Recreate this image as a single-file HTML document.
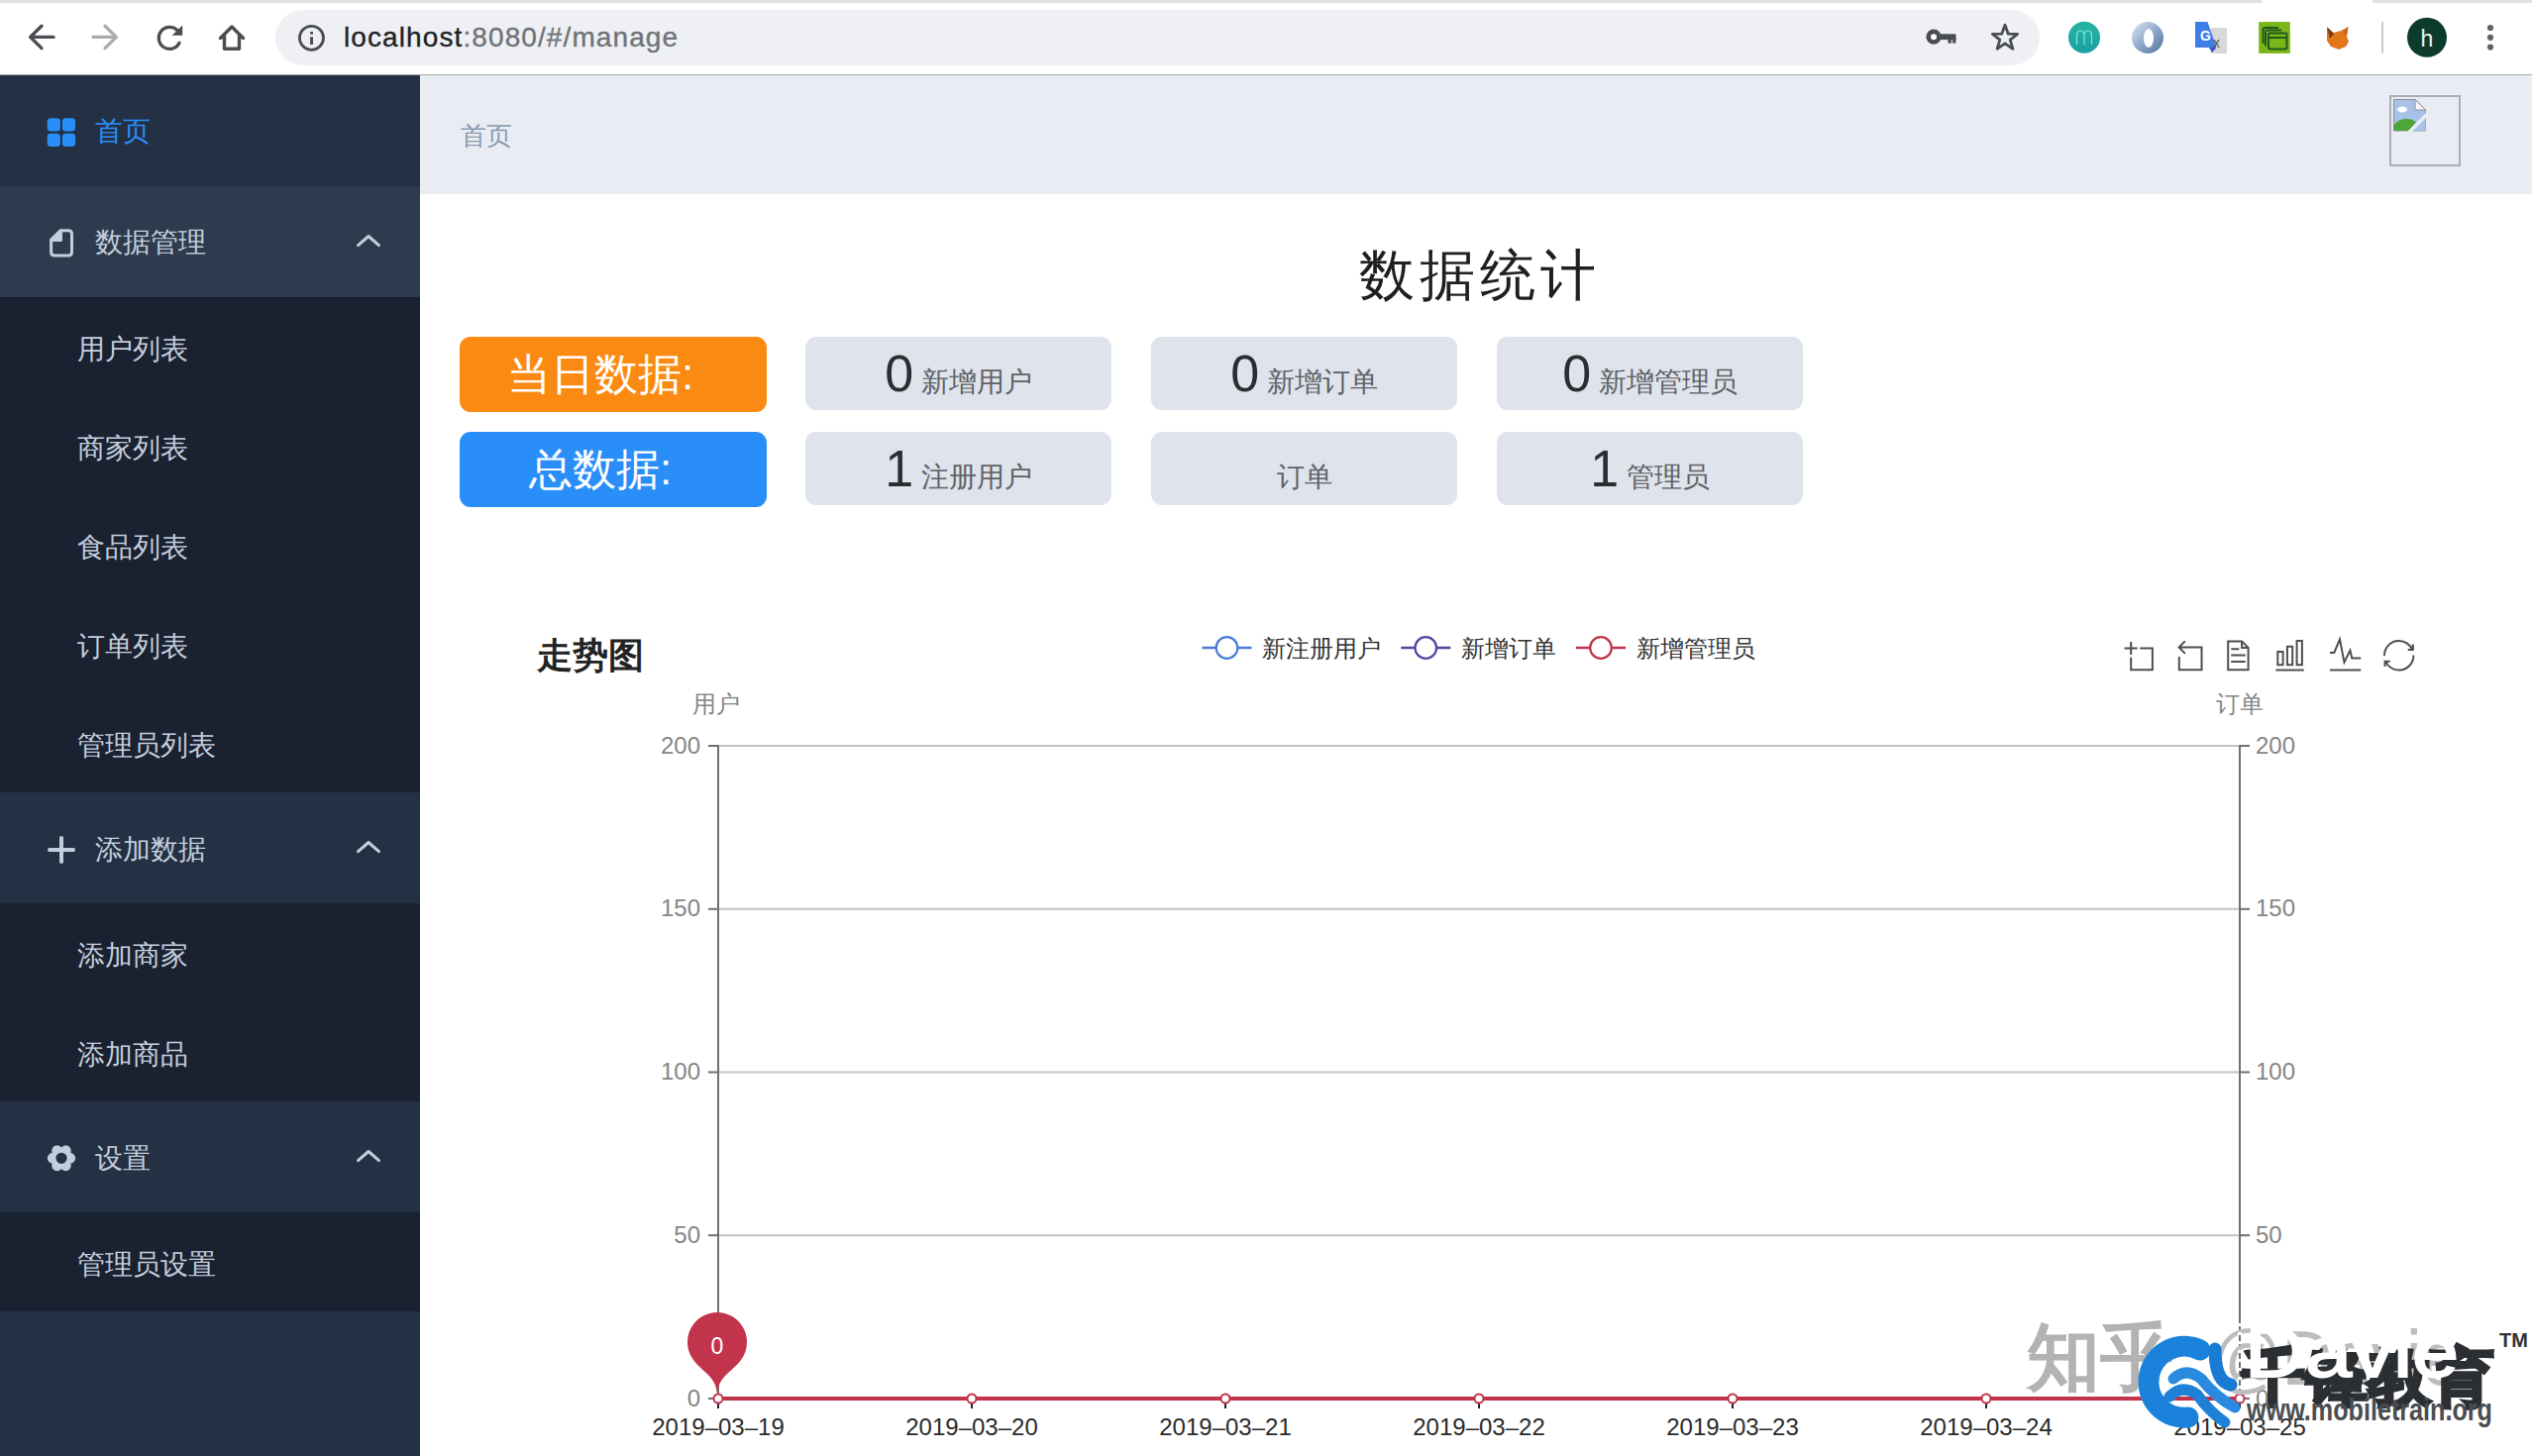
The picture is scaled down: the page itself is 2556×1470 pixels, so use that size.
<!DOCTYPE html>
<html><head><meta charset="utf-8">
<style>
*{box-sizing:border-box;margin:0;padding:0}
html,body{width:2556px;height:1470px;overflow:hidden;background:#fff;font-family:"Liberation Sans",sans-serif}
.a{position:absolute;white-space:nowrap}
#chrome{position:absolute;left:0;top:0;width:2556px;height:76px;background:#fff;border-bottom:1px solid #a9abae}
#strip{position:absolute;left:0;top:0;width:2556px;height:3px;background:#dee1e6}
#url{position:absolute;left:278px;top:10px;width:1781px;height:56px;border-radius:28px;background:#eef0f3}
#side{position:absolute;left:0;top:76px;width:424px;height:1394px;background:#243043}
.mi{position:absolute;left:0;width:424px;height:112px;background:#243043}
.hov{background:#2e3a4d}
.sub{position:absolute;left:0;width:424px;background:#1a2130}
.mt{position:absolute;left:96px;font-size:28px;line-height:28px;color:#c3cedc}
.st{position:absolute;left:78px;font-size:28px;line-height:28px;color:#c3cedc}
#head{position:absolute;left:424px;top:76px;width:2132px;height:120px;background:#e9edf3}
.box{position:absolute;border-radius:11px;background:#dfe3eb;text-align:center;color:#5e6166}
.num{font-size:52px;color:#2b2d30}
</style></head><body>
<div id="chrome"><div id="strip"></div><div id="url"></div>
<svg class="a" style="left:1900px;top:0" width="656" height="76">
<defs>
<linearGradient id="tg" x1="0" y1="0" x2="0" y2="1"><stop offset="0" stop-color="#25b59f"/><stop offset="1" stop-color="#1c9fa6"/></linearGradient>
<linearGradient id="jg" x1="0" y1="0" x2="1" y2="1"><stop offset="0" stop-color="#dfe8f2"/><stop offset="0.5" stop-color="#90aacb"/><stop offset="1" stop-color="#4f6f99"/></linearGradient>
</defs>
<rect x="383" y="0" width="112" height="3" fill="#fff"/>
<g fill="#4a4d51">
<circle cx="52" cy="37.2" r="7.6"/>
<rect x="56" y="34.3" width="18.4" height="5.8"/>
<rect x="66.5" y="37" width="3.4" height="6.6"/><rect x="71" y="37" width="3.4" height="6.6"/>
</g>
<circle cx="52" cy="37.2" r="3" fill="#fff"/>
<path d="M124,25.2 L127.3,34.2 L136.6,34.4 L129.2,40.1 L131.9,49.3 L124,43.8 L116.1,49.3 L118.8,40.1 L111.4,34.4 L120.7,34.2 Z" fill="none" stroke="#4a4d51" stroke-width="2.8" stroke-linejoin="round"/>
<circle cx="204" cy="37.8" r="16" fill="url(#tg)"/>
<path d="M196.5,45 V35.5 Q196.5,31 200.5,31 Q204,31 204,35.5 V45 M204,35.5 Q204,31 207.8,31 Q211.5,31 211.5,35.5 V45" fill="none" stroke="#7fe9e0" stroke-width="1.2"/>
<circle cx="268" cy="38" r="16" fill="url(#jg)"/>
<ellipse cx="269" cy="38.5" rx="5" ry="9.5" fill="#fff"/>
<rect x="332" y="28" width="16" height="26" fill="#d8d8d8"/>
<path d="M316,22 H328.5 L337.5,48 H316 Z" fill="#3f7de8"/>
<path d="M330,48 L337.5,48 L333,53 Z" fill="#2c56c2"/>
<text x="321" y="41" font-size="14" font-weight="bold" fill="#fff">G</text>
<text x="334" y="48" font-size="14" fill="#555">x</text>
<rect x="380.2" y="22.1" width="31.6" height="31.8" fill="#7cb518"/>
<g fill="none" stroke="#1f5a1c" stroke-width="2">
<path d="M384.5,44 V30 Q384.5,28 386.5,28 H400"/>
<path d="M387,46.5 V32.5 Q387,30.5 389,30.5 H403"/>
<rect x="390" y="33.5" width="18.5" height="16" rx="1.5"/>
<path d="M390,38 H408.5"/>
</g>
<path d="M449,28 L456,33 L463,31 L470.5,27 L469,37 L471,42 L468,47 L461,50 L453,47 L449,41 Z" fill="#e2761b"/>
<path d="M449,27 L456,34 L452,39 Z" fill="#763d16"/>
<path d="M470.5,27 L465,32 L469,36 Z" fill="#c0641f"/>
<rect x="504" y="22" width="2" height="32" fill="#c9cacc"/>
<circle cx="550" cy="37.8" r="20" fill="#0c3b2d"/>
<text x="550" y="46.5" font-size="23" text-anchor="middle" fill="#e8f3ee">h</text>
<g fill="#5f6368"><circle cx="614" cy="28" r="3.1"/><circle cx="614" cy="37.8" r="3.1"/><circle cx="614" cy="47.6" r="3.1"/></g>
</svg>
<svg class="a" style="left:0;top:0" width="2556" height="76">
<g fill="none" stroke-linecap="round" stroke-linejoin="round" stroke-width="3.4">
<path d="M54,37.4 H31 M42,26.2 L30.6,37.4 L42,48.6" stroke="#4a4d51"/>
<path d="M94,37.4 H117 M106,26.2 L117.4,37.4 L106,48.6" stroke="#a9acb0"/>
<path d="M222.5,38.5 L234,27 L245.5,38.5 M226.5,35.5 V49.3 H241.5 V35.5" stroke="#4a4d51"/>
</g>
<path d="M181.1,43.2 A11,11 0 1,1 178.6,30.2" fill="none" stroke="#4a4d51" stroke-width="3.2" stroke-linecap="round"/>
<path d="M184.2,25.4 V35.8 H173.6 Z" fill="#4a4d51"/>
<circle cx="314.5" cy="38.3" r="12" fill="none" stroke="#4a4d51" stroke-width="2.8"/>
<rect x="313.1" y="32" width="2.9" height="2.6" fill="#4a4d51"/><rect x="313.1" y="37.2" width="2.9" height="7.8" fill="#4a4d51"/>
</svg>
<div class="a" style="left:347px;top:18px;font-size:28px;line-height:40px;letter-spacing:1.1px;-webkit-text-stroke:0.35px #202124;color:#202124">localhost<span style="color:#6f7378;-webkit-text-stroke:0.35px #6f7378">:8080/#/manage</span></div>
</div>
<div id="side">
  <div class="mi" style="top:0"></div>
  <div class="mi hov" style="top:112px"></div>
  <div class="sub" style="top:224px;height:500px"></div>
  <div class="mi" style="top:724px"></div>
  <div class="sub" style="top:836px;height:200px"></div>
  <div class="mi" style="top:1036px"></div>
  <div class="sub" style="top:1148px;height:100px"></div>
</div>
<div class="a mt" style="top:119px;color:#2a8ef9">首页</div>
<div class="a mt" style="top:231px">数据管理</div>
<div class="a st" style="top:339px">用户列表</div>
<div class="a st" style="top:439px">商家列表</div>
<div class="a st" style="top:539px">食品列表</div>
<div class="a st" style="top:639px">订单列表</div>
<div class="a st" style="top:739px">管理员列表</div>
<div class="a mt" style="top:844px">添加数据</div>
<div class="a st" style="top:951px">添加商家</div>
<div class="a st" style="top:1051px">添加商品</div>
<div class="a mt" style="top:1156px">设置</div>
<div class="a st" style="top:1263px">管理员设置</div>
<svg class="a" style="left:0;top:0" width="424" height="1470">
<g fill="#2a8ef9"><rect x="47.7" y="119.3" width="13.2" height="13.2" rx="3.5"/><rect x="62.9" y="119.3" width="13.2" height="13.2" rx="3.5"/><rect x="47.7" y="134.7" width="13.2" height="13.2" rx="3.5"/><rect x="62.9" y="134.7" width="13.2" height="13.2" rx="3.5"/></g>
<g stroke="#c3cedc" fill="none" stroke-width="3" stroke-linecap="round" stroke-linejoin="round">
<path d="M51.6,242 L61,232.7 H69 Q72.5,232.7 72.5,236.2 V254.6 Q72.5,258.1 69,258.1 H55.1 Q51.6,258.1 51.6,254.6 Z"/>
<path d="M361.5,247.6 L372,238.5 L382.5,247.6"/>
<path d="M361.5,859.6 L372,850.5 L382.5,859.6"/>
<path d="M361.5,1171.6 L372,1162.5 L382.5,1171.6"/>
<path d="M62,846 V870 M50,858 H74" stroke-width="4"/>
</g>
<path d="M51.6,242.5 L61.5,232.7 V242.5 Z" fill="#c3cedc" stroke="#c3cedc" stroke-width="3" stroke-linejoin="round"/>
<path id="gear" fill="#c3cedc" fill-rule="evenodd" d="M76.10,1169.30 L76.09,1169.67 L76.04,1170.04 L75.97,1170.40 L75.88,1170.76 L75.75,1171.11 L75.60,1171.45 L75.43,1171.79 L75.23,1172.11 L75.01,1172.42 L74.77,1172.72 L74.50,1173.00 L74.22,1173.27 L73.91,1173.52 L73.60,1173.75 L73.26,1173.96 L72.91,1174.16 L72.55,1174.33 L72.18,1174.49 L71.78,1174.61 L71.35,1174.70 L71.49,1175.12 L71.58,1175.52 L71.63,1175.92 L71.67,1176.32 L71.67,1176.72 L71.65,1177.12 L71.61,1177.51 L71.55,1177.90 L71.46,1178.27 L71.34,1178.64 L71.21,1179.00 L71.05,1179.35 L70.87,1179.69 L70.67,1180.00 L70.45,1180.31 L70.20,1180.59 L69.94,1180.85 L69.66,1181.09 L69.36,1181.31 L69.05,1181.51 L68.72,1181.68 L68.38,1181.83 L68.03,1181.95 L67.68,1182.05 L67.31,1182.12 L66.94,1182.16 L66.56,1182.18 L66.18,1182.16 L65.80,1182.13 L65.42,1182.07 L65.04,1181.98 L64.67,1181.86 L64.30,1181.73 L63.94,1181.57 L63.59,1181.39 L63.25,1181.18 L62.92,1180.95 L62.60,1180.71 L62.29,1180.43 L62.00,1180.10 L61.71,1180.43 L61.40,1180.71 L61.08,1180.95 L60.75,1181.18 L60.41,1181.39 L60.06,1181.57 L59.70,1181.73 L59.33,1181.86 L58.96,1181.98 L58.58,1182.07 L58.20,1182.13 L57.82,1182.16 L57.44,1182.18 L57.06,1182.16 L56.69,1182.12 L56.32,1182.05 L55.97,1181.95 L55.62,1181.83 L55.28,1181.68 L54.95,1181.51 L54.64,1181.31 L54.34,1181.09 L54.06,1180.85 L53.80,1180.59 L53.55,1180.31 L53.33,1180.00 L53.13,1179.69 L52.95,1179.35 L52.79,1179.00 L52.66,1178.64 L52.54,1178.27 L52.45,1177.90 L52.39,1177.51 L52.35,1177.12 L52.33,1176.72 L52.33,1176.32 L52.37,1175.92 L52.42,1175.52 L52.51,1175.12 L52.65,1174.70 L52.22,1174.61 L51.82,1174.49 L51.45,1174.33 L51.09,1174.16 L50.74,1173.96 L50.40,1173.75 L50.09,1173.52 L49.78,1173.27 L49.50,1173.00 L49.23,1172.72 L48.99,1172.42 L48.77,1172.11 L48.57,1171.79 L48.40,1171.45 L48.25,1171.11 L48.12,1170.76 L48.03,1170.40 L47.96,1170.04 L47.91,1169.67 L47.90,1169.30 L47.91,1168.93 L47.96,1168.56 L48.03,1168.20 L48.12,1167.84 L48.25,1167.49 L48.40,1167.15 L48.57,1166.81 L48.77,1166.49 L48.99,1166.18 L49.23,1165.88 L49.50,1165.60 L49.78,1165.33 L50.09,1165.08 L50.40,1164.85 L50.74,1164.64 L51.09,1164.44 L51.45,1164.27 L51.82,1164.11 L52.22,1163.99 L52.65,1163.90 L52.51,1163.48 L52.42,1163.08 L52.37,1162.68 L52.33,1162.28 L52.33,1161.88 L52.35,1161.48 L52.39,1161.09 L52.45,1160.70 L52.54,1160.33 L52.66,1159.96 L52.79,1159.60 L52.95,1159.25 L53.13,1158.91 L53.33,1158.60 L53.55,1158.29 L53.80,1158.01 L54.06,1157.75 L54.34,1157.51 L54.64,1157.29 L54.95,1157.09 L55.28,1156.92 L55.62,1156.77 L55.97,1156.65 L56.32,1156.55 L56.69,1156.48 L57.06,1156.44 L57.44,1156.42 L57.82,1156.44 L58.20,1156.47 L58.58,1156.53 L58.96,1156.62 L59.33,1156.74 L59.70,1156.87 L60.06,1157.03 L60.41,1157.21 L60.75,1157.42 L61.08,1157.65 L61.40,1157.89 L61.71,1158.17 L62.00,1158.50 L62.29,1158.17 L62.60,1157.89 L62.92,1157.65 L63.25,1157.42 L63.59,1157.21 L63.94,1157.03 L64.30,1156.87 L64.67,1156.74 L65.04,1156.62 L65.42,1156.53 L65.80,1156.47 L66.18,1156.44 L66.56,1156.42 L66.94,1156.44 L67.31,1156.48 L67.68,1156.55 L68.03,1156.65 L68.38,1156.77 L68.72,1156.92 L69.05,1157.09 L69.36,1157.29 L69.66,1157.51 L69.94,1157.75 L70.20,1158.01 L70.45,1158.29 L70.67,1158.60 L70.87,1158.91 L71.05,1159.25 L71.21,1159.60 L71.34,1159.96 L71.46,1160.33 L71.55,1160.70 L71.61,1161.09 L71.65,1161.48 L71.67,1161.88 L71.67,1162.28 L71.63,1162.68 L71.58,1163.08 L71.49,1163.48 L71.35,1163.90 L71.78,1163.99 L72.18,1164.11 L72.55,1164.27 L72.91,1164.44 L73.26,1164.64 L73.60,1164.85 L73.91,1165.08 L74.22,1165.33 L74.50,1165.60 L74.77,1165.88 L75.01,1166.18 L75.23,1166.49 L75.43,1166.81 L75.60,1167.15 L75.75,1167.49 L75.88,1167.84 L75.97,1168.20 L76.04,1168.56 L76.09,1168.93Z M67.6,1169.3 A5.6,5.6 0 1,0 56.4,1169.3 A5.6,5.6 0 1,0 67.6,1169.3Z"/>
</svg>
<div id="head"></div>
<div class="a" style="left:465px;top:124px;font-size:26px;line-height:26px;color:#8a9ab0">首页</div>
<svg class="a" style="left:2412px;top:96px" width="72" height="72">
<rect x="1" y="1" width="70" height="70" fill="none" stroke="#a9adb4" stroke-width="2"/>
<path d="M4.5,4.5 H26 L36.5,15 V36 H4.5 Z" fill="#a9c2ea" stroke="#7a7f87" stroke-width="0.8"/>
<path d="M26,4.5 V15 H36.5 Z" fill="#f4f6fb" stroke="#7a7f87" stroke-width="0.8"/>
<ellipse cx="13" cy="14.5" rx="5" ry="3" fill="#fff"/>
<path d="M4.5,36 V30 Q15,19 27,27 L20,36 Z" fill="#4ea53a"/>
<path d="M20,36 L36.5,20 V36 Z" fill="#a9c2ea"/>
<path d="M18,37 L37,18 L37,23 L23,37 Z" fill="#e8eef5"/>
</svg>

<div class="a" style="left:1372px;top:250px;font-size:56px;line-height:56px;letter-spacing:5px;color:#1f1f1f">数据统计</div>

<div class="box" style="left:464px;top:340px;width:310px;height:76px;background:#fb8a12;color:#fff;font-size:44px;line-height:76px;padding-right:26px">当日数据:</div>
<div class="box" style="left:464px;top:436px;width:310px;height:76px;background:#2a8ef9;color:#fff;font-size:44px;line-height:76px;padding-right:26px">总数据:</div>
<div class="box" style="left:813px;top:340px;width:309px;height:74px;font-size:28px;line-height:74px"><span class="num">0</span> 新增用户</div>
<div class="box" style="left:1162px;top:340px;width:309px;height:74px;font-size:28px;line-height:74px"><span class="num">0</span> 新增订单</div>
<div class="box" style="left:1511px;top:340px;width:309px;height:74px;font-size:28px;line-height:74px"><span class="num">0</span> 新增管理员</div>
<div class="box" style="left:813px;top:436px;width:309px;height:74px;font-size:28px;line-height:74px"><span class="num">1</span> 注册用户</div>
<div class="box" style="left:1162px;top:436px;width:309px;height:74px;font-size:28px;line-height:74px"><span class="num"></span> 订单</div>
<div class="box" style="left:1511px;top:436px;width:309px;height:74px;font-size:28px;line-height:74px"><span class="num">1</span> 管理员</div>

<!--CHART-->
<svg class="a" style="left:0;top:0" width="2556" height="1470" viewBox="0 0 2556 1470">
<path d="M0,13.5h26.9 M13.5,26.9V0 M32.1,13.5H58V58H13.5V32.1" transform="translate(2144.60,648.00) scale(0.4879)" fill="none" stroke="#4f4f4f" stroke-width="2" vector-effect="non-scaling-stroke"/>
<path d="M22,1.4L9.9,13.5l12.3,12.3 M10.3,13.5H54.9v44.6 H10.3v-26" transform="translate(2194.55,646.69) scale(0.5097)" fill="none" stroke="#4f4f4f" stroke-width="2" vector-effect="non-scaling-stroke"/>
<path d="M17.5,17.3H33 M45.4,29.5h-28 M11.5,2v56H51V14.8L38.4,2H11.5z M38.4,2.2v12.7H51 M45.4,41.7h-28" transform="translate(2243.27,646.37) scale(0.5161)" fill="none" stroke="#4f4f4f" stroke-width="2" vector-effect="non-scaling-stroke"/>
<path d="M6.7,22.9h10V48h-10V22.9zM24.9,13h10v35h-10V13zM43.2,2h10v46h-10V2zM3.1,58h53.7" transform="translate(2295.76,645.94) scale(0.5286)" fill="none" stroke="#4f4f4f" stroke-width="2" vector-effect="non-scaling-stroke"/>
<path d="M4.1,28.9h7.1l9.3-22l7.4,38l9.7-19.7l3,12.8h14.9M4.1,58h51.4" transform="translate(2349.50,641.30) scale(0.6086)" fill="none" stroke="#4f4f4f" stroke-width="2" vector-effect="non-scaling-stroke"/>
<path d="M47,18.9h9.8V8.7 M56.3,20.1 C52.1,9,40.5,0.6,26.8,2.1C12.6,3.7,1.6,16.2,2.1,30.6 M13,41.1H3.1v10.2 M3.7,39.9c4.2,11.1,15.8,19.5,29.5,18 c14.2-1.6,25.2-14.1,24.7-28.5" transform="translate(2405.90,645.98) scale(0.5272)" fill="none" stroke="#4f4f4f" stroke-width="2" vector-effect="non-scaling-stroke"/>
<line x1="725" y1="753.0" x2="2261" y2="753.0" stroke="#c4c4c4" stroke-width="2"/>
<line x1="725" y1="917.8" x2="2261" y2="917.8" stroke="#c4c4c4" stroke-width="2"/>
<line x1="725" y1="1082.5" x2="2261" y2="1082.5" stroke="#c4c4c4" stroke-width="2"/>
<line x1="725" y1="1247.2" x2="2261" y2="1247.2" stroke="#c4c4c4" stroke-width="2"/>
<line x1="725" y1="752" x2="725" y2="1412" stroke="#707070" stroke-width="2"/>
<line x1="2261" y1="752" x2="2261" y2="1412" stroke="#707070" stroke-width="2"/>
<line x1="715" y1="753.0" x2="725" y2="753.0" stroke="#707070" stroke-width="2"/>
<line x1="2261" y1="753.0" x2="2271" y2="753.0" stroke="#707070" stroke-width="2"/>
<text x="707" y="760.5" text-anchor="end" font-size="24" fill="#858585">200</text>
<text x="2277" y="760.5" font-size="24" fill="#858585">200</text>
<line x1="715" y1="917.8" x2="725" y2="917.8" stroke="#707070" stroke-width="2"/>
<line x1="2261" y1="917.8" x2="2271" y2="917.8" stroke="#707070" stroke-width="2"/>
<text x="707" y="925.2" text-anchor="end" font-size="24" fill="#858585">150</text>
<text x="2277" y="925.2" font-size="24" fill="#858585">150</text>
<line x1="715" y1="1082.5" x2="725" y2="1082.5" stroke="#707070" stroke-width="2"/>
<line x1="2261" y1="1082.5" x2="2271" y2="1082.5" stroke="#707070" stroke-width="2"/>
<text x="707" y="1090.0" text-anchor="end" font-size="24" fill="#858585">100</text>
<text x="2277" y="1090.0" font-size="24" fill="#858585">100</text>
<line x1="715" y1="1247.2" x2="725" y2="1247.2" stroke="#707070" stroke-width="2"/>
<line x1="2261" y1="1247.2" x2="2271" y2="1247.2" stroke="#707070" stroke-width="2"/>
<text x="707" y="1254.8" text-anchor="end" font-size="24" fill="#858585">50</text>
<text x="2277" y="1254.8" font-size="24" fill="#858585">50</text>
<line x1="715" y1="1412.0" x2="725" y2="1412.0" stroke="#707070" stroke-width="2"/>
<line x1="2261" y1="1412.0" x2="2271" y2="1412.0" stroke="#707070" stroke-width="2"/>
<text x="707" y="1419.5" text-anchor="end" font-size="24" fill="#858585">0</text>
<text x="2277" y="1419.5" font-size="24" fill="#858585">0</text>
<text x="723" y="719" text-anchor="middle" font-size="24" fill="#858585">用户</text>
<text x="2261" y="719" text-anchor="middle" font-size="24" fill="#858585">订单</text>
<line x1="725" y1="1412" x2="2261" y2="1412" stroke="#333" stroke-width="2"/>
<line x1="725.0" y1="1412" x2="725.0" y2="1422" stroke="#222" stroke-width="2"/>
<text x="725.0" y="1449" text-anchor="middle" font-size="24" fill="#2a2a2a">2019–03–19</text>
<line x1="981.0" y1="1412" x2="981.0" y2="1422" stroke="#222" stroke-width="2"/>
<text x="981.0" y="1449" text-anchor="middle" font-size="24" fill="#2a2a2a">2019–03–20</text>
<line x1="1237.0" y1="1412" x2="1237.0" y2="1422" stroke="#222" stroke-width="2"/>
<text x="1237.0" y="1449" text-anchor="middle" font-size="24" fill="#2a2a2a">2019–03–21</text>
<line x1="1493.0" y1="1412" x2="1493.0" y2="1422" stroke="#222" stroke-width="2"/>
<text x="1493.0" y="1449" text-anchor="middle" font-size="24" fill="#2a2a2a">2019–03–22</text>
<line x1="1749.0" y1="1412" x2="1749.0" y2="1422" stroke="#222" stroke-width="2"/>
<text x="1749.0" y="1449" text-anchor="middle" font-size="24" fill="#2a2a2a">2019–03–23</text>
<line x1="2005.0" y1="1412" x2="2005.0" y2="1422" stroke="#222" stroke-width="2"/>
<text x="2005.0" y="1449" text-anchor="middle" font-size="24" fill="#2a2a2a">2019–03–24</text>
<line x1="2261.0" y1="1412" x2="2261.0" y2="1422" stroke="#222" stroke-width="2"/>
<text x="2261.0" y="1449" text-anchor="middle" font-size="24" fill="#2a2a2a">2019–03–25</text>
<line x1="725" y1="1412" x2="2261" y2="1412" stroke="#c2334c" stroke-width="4"/>
<circle cx="725.0" cy="1412" r="4.5" fill="#fff" stroke="#c2334c" stroke-width="2"/>
<circle cx="981.0" cy="1412" r="4.5" fill="#fff" stroke="#c2334c" stroke-width="2"/>
<circle cx="1237.0" cy="1412" r="4.5" fill="#fff" stroke="#c2334c" stroke-width="2"/>
<circle cx="1493.0" cy="1412" r="4.5" fill="#fff" stroke="#c2334c" stroke-width="2"/>
<circle cx="1749.0" cy="1412" r="4.5" fill="#fff" stroke="#c2334c" stroke-width="2"/>
<circle cx="2005.0" cy="1412" r="4.5" fill="#fff" stroke="#c2334c" stroke-width="2"/>
<circle cx="2261.0" cy="1412" r="4.5" fill="#fff" stroke="#c2334c" stroke-width="2"/>
<path d="M697.14,1368.36 A30.0,30.0 0 1,1 750.86,1368.36 C742.84,1384.48 724.00,1388.00 724.00,1409.00 C724.00,1388.00 705.16,1384.48 697.14,1368.36Z" fill="#c2334c"/>
<text x="724" y="1367" text-anchor="middle" font-size="23" fill="#fff">0</text>
<text x="542" y="674" font-size="36" font-weight="bold" fill="#222">走势图</text>
<line x1="1213.5" y1="654" x2="1263.5" y2="654" stroke="#4a7dd6" stroke-width="2.4"/>
<circle cx="1238.5" cy="654" r="10.8" fill="#fff" stroke="#4a7dd6" stroke-width="2.2"/>
<text x="1274" y="663" font-size="24" fill="#333">新注册用户</text>
<line x1="1414.3" y1="654" x2="1464.3" y2="654" stroke="#54459f" stroke-width="2.4"/>
<circle cx="1439.3" cy="654" r="10.8" fill="#fff" stroke="#54459f" stroke-width="2.2"/>
<text x="1475" y="663" font-size="24" fill="#333">新增订单</text>
<line x1="1591" y1="654" x2="1641" y2="654" stroke="#c2334c" stroke-width="2.4"/>
<circle cx="1616" cy="654" r="10.8" fill="#fff" stroke="#c2334c" stroke-width="2.2"/>
<text x="1652" y="663" font-size="24" fill="#333">新增管理员</text>
<text x="2046" y="1396" font-size="74" fill="#b3b3b3" stroke="#b3b3b3" stroke-width="2.5">知乎</text>
<text x="2232" y="1398" font-size="78" fill="#bdbdbd" textLength="252" lengthAdjust="spacingAndGlyphs">@Davie</text>
<g fill="none" stroke-linecap="round">
<path d="M2221,1363 A36,36 0 1,0 2209,1431" stroke="#1b82dc" stroke-width="21"/>
<path d="M2236,1362 Q2236,1395 2252,1398" stroke="#1a7bd4" stroke-width="13"/>
<path d="M2194,1392 Q2207,1380 2222,1392 Q2236,1410 2256,1421" stroke="#2a8ae0" stroke-width="11"/>
<path d="M2190,1410 Q2203,1397 2218,1408 Q2230,1425 2246,1436" stroke="#1f80d8" stroke-width="11"/>
</g>
<text x="2263" y="1412" font-size="62" font-weight="bold" fill="#2b2f33" stroke="#2b2f33" stroke-width="3.5" textLength="254" lengthAdjust="spacingAndGlyphs">千锋教育</text>
<text x="2268" y="1434" font-size="31" font-weight="bold" fill="#4a4d51" textLength="248" lengthAdjust="spacingAndGlyphs">www.mobiletrain.org</text>
<rect x="2259" y="1336" width="4" height="3" fill="#fff"/>
<rect x="2259" y="1345" width="4" height="3" fill="#fff"/>
<rect x="2259" y="1354" width="4" height="3" fill="#fff"/>
<rect x="2259" y="1363" width="4" height="3" fill="#fff"/>
<rect x="2259" y="1372" width="4" height="3" fill="#fff"/>
<rect x="2259" y="1381" width="4" height="3" fill="#fff"/>
<rect x="2259" y="1390" width="4" height="3" fill="#fff"/>
<rect x="2259" y="1399" width="4" height="3" fill="#fff"/>
<text x="2523" y="1360" font-size="20" font-weight="bold" fill="#333">TM</text>
<text x="2266" y="1390" font-size="72" fill="#fff" stroke="#fff" stroke-width="2" textLength="216" lengthAdjust="spacingAndGlyphs">Davie</text>
</svg>
<!--/CHART-->
</body></html>
